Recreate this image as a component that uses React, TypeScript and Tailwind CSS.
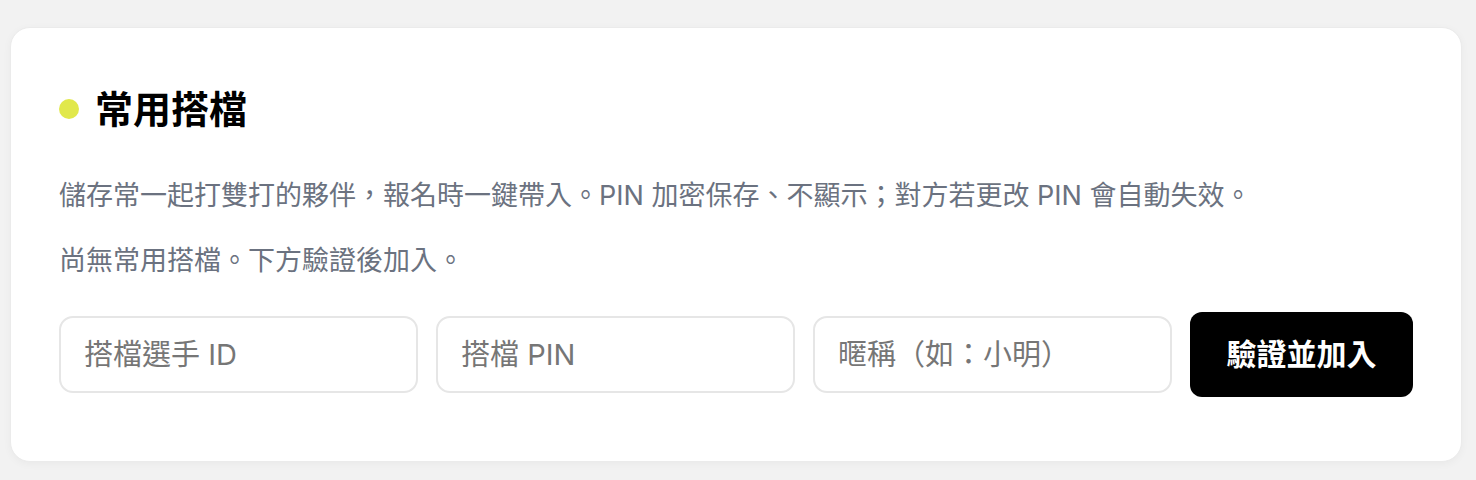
import React from "react";

const font = {
  fontFamily: 'Inter, "Noto Sans CJK TC", "Noto Sans", sans-serif',
};

const fields = ["搭檔選手 ID", "搭檔 PIN", "暱稱（如：小明）"];

export default function App() {
  return (
    <div className="min-h-[480px] bg-[#f2f2f2] pl-[10px] pr-[14px] pt-[27px]" style={font}>
      <section className="rounded-[20px] border border-[#ebebeb] bg-white px-12 pt-[48px] pb-16 shadow-[0_2px_8px_rgba(0,0,0,0.04)]">
        <div className="flex items-center gap-4">
          <span className="h-5 w-5 shrink-0 rounded-full bg-[#e1e84b]" />
          <h2 className="text-[38px] font-bold leading-[66px] text-black">常用搭檔</h2>
        </div>

        <p className="mt-[34px] text-[27px] leading-[40px] text-[#6b7280]">
          儲存常一起打雙打的夥伴，報名時一鍵帶入。PIN 加密保存、不顯示；對方若更改 PIN 會自動失效。
        </p>
        <p className="mt-[25px] text-[27px] leading-[40px] text-[#6b7280]">
          尚無常用搭檔。下方驗證後加入。
        </p>

        <div className="mt-[31px] flex items-center gap-[18px]">
          {fields.map((f) => (
            <input
              key={f}
              placeholder={f}
              className="h-[77px] min-w-0 flex-1 rounded-[14px] border-2 border-[#e6e6e6] bg-white px-[23px] text-[29px] text-black outline-none placeholder:text-[#767676]"
              style={font}
            />
          ))}
          <button className="h-[85px] w-[223px] shrink-0 rounded-[12px] bg-black text-[30px] font-bold text-white">
            驗證並加入
          </button>
        </div>
      </section>
    </div>
  );
}
